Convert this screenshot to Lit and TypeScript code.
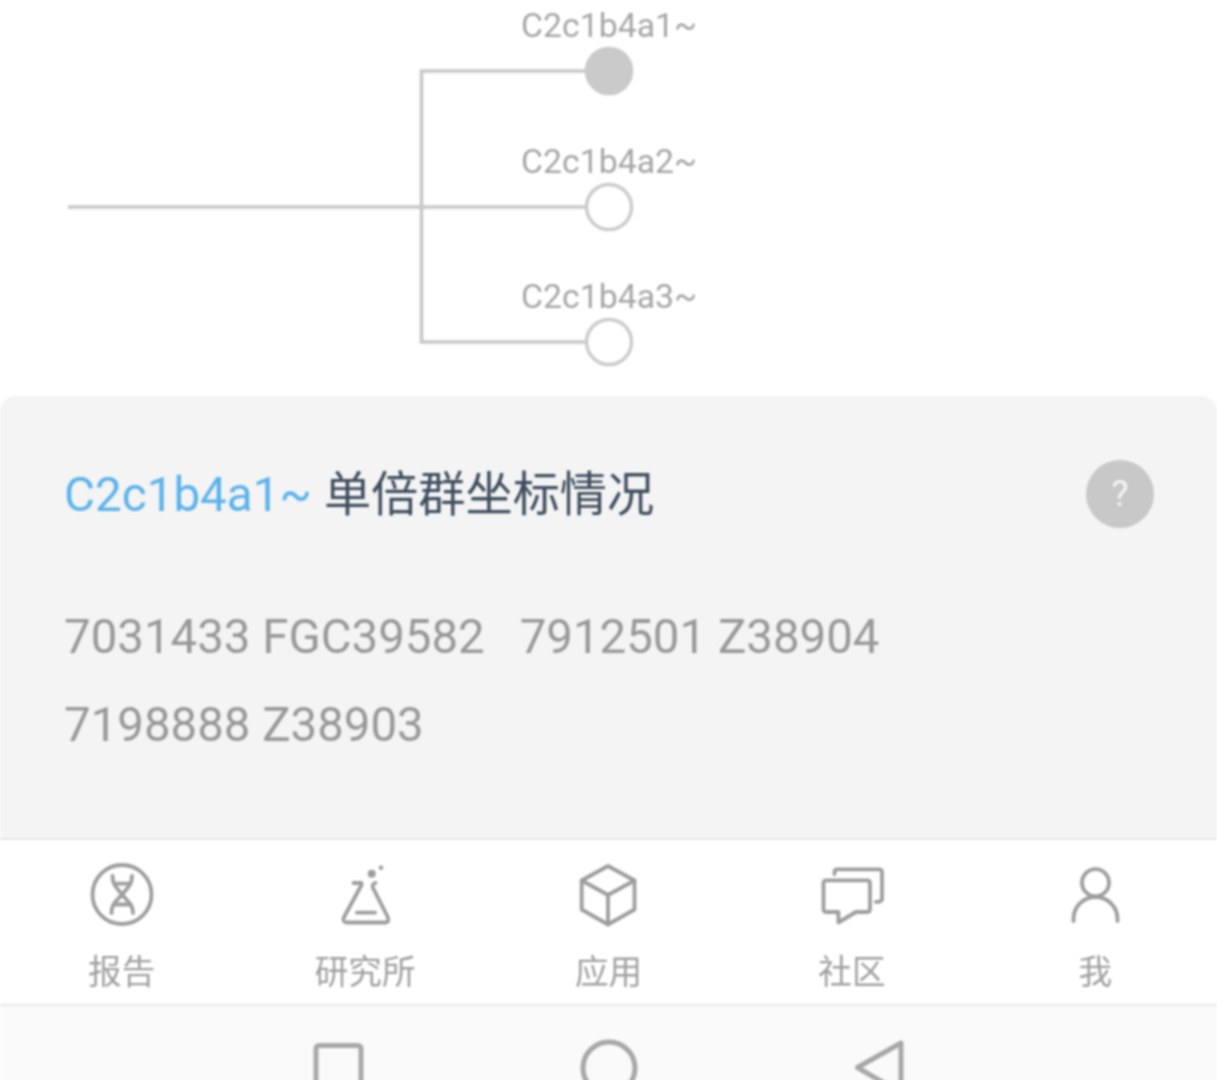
import { LitElement, html, css, svg } from "lit";
import { customElement } from "lit/decorators.js";

const nodes = [
  { name: "C2c1b4a1~", y: 71, filled: true },
  { name: "C2c1b4a2~", y: 207, filled: false },
  { name: "C2c1b4a3~", y: 342, filled: false },
];

const navIcons = [
  svg`<circle cx="40" cy="38.5" r="29.5"/>
      <path d="M30.500 20c0 9 4.500 12 9.500 18.500s11 9 11 18.500M50 20c0 9-4.500 12-10 18.500s-10.500 9-10.500 18.500"/>
      <path d="M33 27.700h14M33 48.500h14"/>`,
  svg`<path d="M28.500 27H36.500V29L18.800 61.500Q17.500 66.500 22 66.500H60Q64.500 66.500 63 61.500L48 32Q46.500 28 50.500 27"/>
      <path d="M32 56.700H50"/>
      <circle class="solid" cx="46.700" cy="17.700" r="4"/>
      <circle class="solid" cx="56" cy="11.700" r="2.300"/>`,
  svg`<path d="M40 10L66.500 24.500V53.500L40 68.500L13.700 53.500V24.500Z"/>
      <path d="M13.700 24.500L40 39L66.500 24.500M40 39V68.500"/>`,
  svg`<path d="M14.500 24.300H55Q58 24.300 58 27.300V53Q58 56 55 56H44L26.400 66.500V56H14.500Q11.500 56 11.500 53V27.300Q11.500 24.300 14.500 24.300Z"/>
      <path d="M22.500 18V16Q22.500 13.300 25.500 13.300H67Q70 13.300 70 16.300V43Q70 46 64 46"/>`,
  svg`<circle cx="40.500" cy="26.700" r="13.500"/>
      <path d="M18.500 65V63A22 22 0 0 1 62.500 63V65"/>`,
];
const navLabels = ["报告", "研究所", "应用", "社区", "我"];

@customElement("app-root")
export class AppRoot extends LitElement {
  static styles = css`
    :host {
      display: block;
      height: 1080px;
      overflow: hidden;
      background: #fff;
      font-family: Roboto, "Noto Sans CJK SC", sans-serif;
    }
    .page {
      display: flex;
      flex-direction: column;
      height: 1090px;
      overflow: hidden;
      background: #fff;
      filter: blur(0.8px);
    }
    .tree {
      position: relative;
      flex: 0 0 396px;
    }
    .tree svg {
      position: absolute;
      inset: 0;
      width: 100%;
      height: 100%;
    }
    .wire {
      fill: none;
      stroke: #c8c8c8;
      stroke-width: 3.500;
    }
    .dot {
      fill: #fff;
      stroke: #cccccc;
      stroke-width: 3.500;
    }
    .dot.on {
      fill: #cacaca;
      stroke: #cacaca;
    }
    .node-label {
      position: absolute;
      left: 521px;
      font-size: 33.800px;
      line-height: 40px;
      color: #a6a6a6;
      white-space: nowrap;
    }
    .card {
      flex: 0 0 442px;
      box-sizing: border-box;
      background: #f4f4f4;
      border-radius: 16px 16px 0 0;
      padding: 64px 63px 0 64px;
    }
    .head {
      display: flex;
      align-items: center;
      justify-content: space-between;
      height: 68px;
    }
    .head-text {
      padding-bottom: 8px;
    }
    .hap {
      color: #5bb3ec;
      margin-right: 12px;
      font-size: 47.600px;
    }
    .title {
      color: #3f4d5e;
      font-size: 47.200px;
    }
    .help {
      display: flex;
      align-items: center;
      justify-content: center;
      width: 68px;
      height: 68px;
      border-radius: 50%;
      background: #c8c8c8;
      color: #f4f4f4;
      font-size: 36px;
    }
    .coords {
      display: flex;
      flex-wrap: wrap;
      column-gap: 35px;
      margin-top: 65px;
      font-size: 47.400px;
      line-height: 88px;
      color: #999;
    }
    .nav {
      flex: 0 0 168px;
      box-sizing: border-box;
      display: grid;
      grid-template-columns: repeat(5, 1fr);
      background: #fff;
      border-top: 2px solid #dfe7ee;
      border-bottom: 2px solid #e8e8e8;
    }
    .tab {
      display: flex;
      flex-direction: column;
      align-items: center;
      padding-top: 16px;
      color: #a0a0a0;
      font-size: 33.600px;
      line-height: 40px;
    }
    .tab svg {
      width: 80px;
      height: 80px;
      margin-bottom: 17px;
      fill: none;
      stroke: #9e9e9e;
      stroke-width: 3.800;
      stroke-linejoin: round;
      stroke-linecap: round;
    }
    .tab svg .solid {
      fill: #9e9e9e;
      stroke: none;
    }
    .sys {
      flex: 1 0 auto;
      display: flex;
      justify-content: center;
      gap: 210px;
      padding-top: 31px;
      background: #fafafa;
    }
    .sys svg {
      width: 60px;
      height: 60px;
      flex: none;
      overflow: visible;
      fill: none;
      stroke: #a8a8a8;
      stroke-width: 5;
      stroke-linejoin: round;
    }
  `;

  render() {
    return html`
      <div class="page">
        <section class="tree">
          <svg viewBox="0 0 1217 396">
            <path class="wire" d="M68 207H586M586 71H421.500V342H586" />
            ${nodes.map(
              (n) => svg`<circle class="dot ${n.filled ? "on" : ""}" cx="609" cy=${n.y} r="22.5" />`
            )}
          </svg>
          ${nodes.map(
            (n) => html`<div class="node-label" style="top:${n.y - 65}px">${n.name}</div>`
          )}
        </section>

        <section class="card">
          <div class="head">
            <div class="head-text"><span class="hap">C2c1b4a1~</span><span class="title">单倍群坐标情况</span></div>
            <div class="help">?</div>
          </div>
          <div class="coords">
            <span>7031433 FGC39582</span>
            <span>7912501 Z38904</span>
            <span>7198888 Z38903</span>
          </div>
        </section>

        <nav class="nav">
          ${navLabels.map(
            (label, i) => html`
              <div class="tab">
                <svg viewBox="0 0 80 80">${navIcons[i]}</svg>
                <span>${label}</span>
              </div>
            `
          )}
        </nav>

        <div class="sys">
          <svg viewBox="0 0 60 60"><rect x="7" y="8.500" width="45" height="60" rx="3" /></svg>
          <svg viewBox="0 0 60 60"><circle cx="30" cy="31" r="26" /></svg>
          <svg viewBox="0 0 60 60"><path d="M52 6V56L8.500 30.500Z" /></svg>
        </div>
      </div>
    `;
  }
}
